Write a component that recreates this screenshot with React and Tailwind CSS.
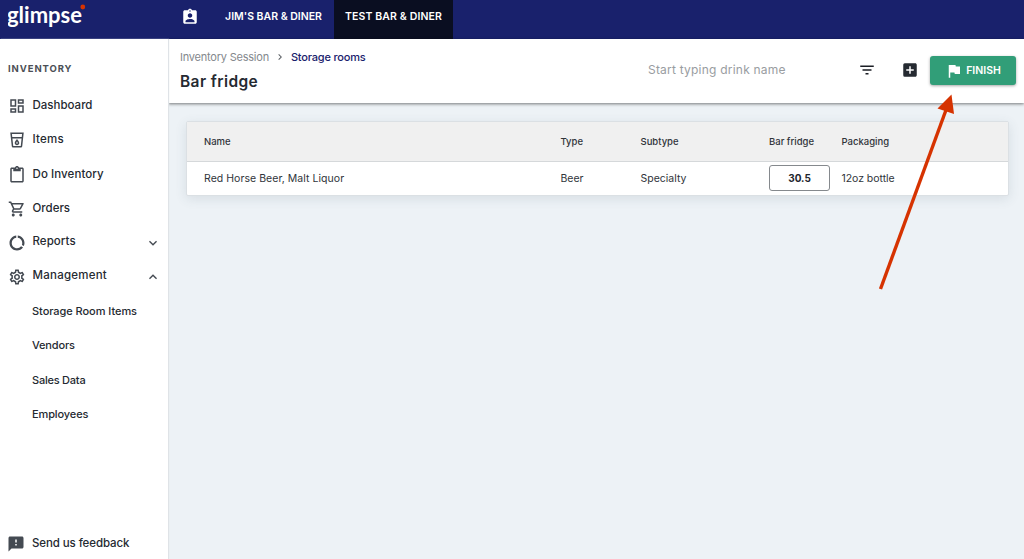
import React from "react";
import {
  MdAssignmentInd,
  MdOutlineDashboard,
  MdOutlineLocalDrink,
  MdContentPaste,
  MdOutlineShoppingCart,
  MdDataUsage,
  MdOutlineSettings,
  MdExpandMore,
  MdExpandLess,
  MdChevronRight,
  MdFeedback,
  MdFilterList,
  MdAddBox,
  MdFlag,
} from "react-icons/md";

const navItems = [
  { label: "Dashboard", icon: MdOutlineDashboard, row: "h-[34px]" },
  { label: "Items", icon: MdOutlineLocalDrink, row: "h-[34px] tracking-[0.02em]" },
  { label: "Do Inventory", icon: MdContentPaste, row: "h-[35px] tracking-[0.007em]" },
  { label: "Orders", icon: MdOutlineShoppingCart, row: "h-[34px]" },
  { label: "Reports", icon: MdDataUsage, row: "h-[33px] tracking-[0.005em]", toggle: MdExpandMore },
  { label: "Management", icon: MdOutlineSettings, row: "h-[35px] tracking-[0.02em]", toggle: MdExpandLess },
];

const managementItems = [
  { label: "Storage Room Items", style: "tracking-[-0.005em]" },
  { label: "Vendors", style: "tracking-[-0.015em]" },
  { label: "Sales Data", style: "tracking-[-0.02em]" },
  { label: "Employees", style: "tracking-[-0.01em]" },
];

const Logo = () => (
  <svg width="84" height="30" viewBox="0 0 84 30" className="shrink-0">
    <text
      x="-1"
      y="23"
      textLength="75"
      lengthAdjust="spacingAndGlyphs"
      fontFamily="Lato, sans-serif"
      fontSize="23.5"
      fontWeight="700"
      fill="#fff"
    >
      glimpse
    </text>
    <circle cx="74.8" cy="7" r="2.4" fill="#d63301" />
  </svg>
);

const TopBar = () => (
  <header className="flex h-[39px] shrink-0 bg-[#19216c] pl-2 text-[10.5px] font-semibold text-white">
    <Logo />
    <div className="flex w-[121px] items-center justify-end pr-[14px] pb-[6px]">
      <MdAssignmentInd className="h-[18px] w-[18px]" />
    </div>
    <div className="flex w-[121px] items-center justify-center pb-[6px] whitespace-nowrap">
      JIM'S BAR &amp; DINER
    </div>
    <div className="flex w-[119px] items-center justify-center bg-[#0a0e21] pb-[6px] tracking-[0.012em] whitespace-nowrap">
      TEST BAR &amp; DINER
    </div>
  </header>
);

const Sidebar = () => (
  <aside className="relative z-10 flex w-[168px] shrink-0 flex-col bg-white font-medium text-[#252a31] shadow-[1px_0_1px_#dfe3e7]">
    <h2 className="mt-[22px] mb-[12px] ml-2 text-[9.5px] leading-4 font-bold tracking-[0.095em] text-[#4b4f55]">
      INVENTORY
    </h2>
    <nav className="flex flex-col text-[11.5px]">
      {navItems.map(({ label, icon: Icon, row, toggle: Toggle }) => (
        <a key={label} className={`flex items-center pl-[7.5px] ${row}`}>
          <Icon className="mr-[7px] h-[18px] w-[18px] text-[#444a52]" />
          <span className={Toggle ? "pb-px" : ""}>{label}</span>
          {Toggle && <Toggle className="mr-[7px] ml-auto h-4 w-4 text-[#444a52]" />}
        </a>
      ))}
    </nav>
    <ul className="pl-8 text-[11px]">
      {managementItems.map(({ label, style }) => (
        <li key={label} className={`flex h-[34.4px] items-center ${style}`}>
          {label}
        </li>
      ))}
    </ul>
    <a className="mt-auto flex h-[31px] items-center pl-[7px] text-[11.5px] tracking-[-0.009em]">
      <MdFeedback className="mr-[7px] h-[18px] w-[18px] text-[#444a52]" />
      Send us feedback
    </a>
  </aside>
);

const PageHeader = () => (
  <div className="flex h-[64px] shrink-0 bg-white pl-3 shadow-[0_1px_3px_rgba(0,0,0,0.5)]">
    <div className="w-[467px] pt-[10px]">
      <div className="flex h-4 items-center text-[11px]">
        <span className="tracking-[-0.02em] text-[#84888d]">Inventory Session</span>
        <MdChevronRight className="mx-[5px] h-3 w-3 text-[#5c6065]" />
        <span className="font-medium tracking-[-0.018em] text-[#19216c]">Storage rooms</span>
      </div>
      <h1 className="mt-[7px] text-[15.5px] leading-5 font-semibold tracking-[0.026em] text-[#252a31]">
        Bar fridge
      </h1>
    </div>
    <div className="w-[211px] pt-[21px] pl-px text-[12px] leading-5 text-[#999da1]">
      <span className="tracking-[0.018em]">Start typing drink name</span>
    </div>
    <MdFilterList className="mt-[22px] h-[18px] w-[18px] text-[#1b1e25]" />
    <MdAddBox className="mt-[22px] ml-[25px] h-[18px] w-[18px] text-[#252a31]" />
    <button className="mt-[17px] ml-[11px] flex h-[29px] w-[86px] items-center justify-center rounded-[3px] bg-[#319e78] text-[10.5px] font-semibold text-white shadow-[0_1px_3px_rgba(0,0,0,0.35)]">
      <MdFlag className="mr-[3px] h-[18px] w-[18px]" />
      FINISH
    </button>
  </div>
);

const columns = "grid grid-cols-[356.5px_80px_128.5px_72.5px_1fr] items-center pl-[17px]";

const ItemsTable = () => (
  <div className="mt-[18px] mr-[15px] ml-[18px] rounded-[2px] border border-[#dbe0e4] bg-white text-[#30343a] shadow-[0_3px_12px_rgba(60,80,100,0.12)]">
    <div className={`${columns} h-[40px] border-b border-[#d5d8da] bg-[#f0f0f0] pt-px text-[9.5px] font-medium`}>
      <span>Name</span>
      <span>Type</span>
      <span>Subtype</span>
      <span>Bar fridge</span>
      <span>Packaging</span>
    </div>
    <div className={`${columns} h-[33px] text-[10.5px]`}>
      <span className="tracking-[0.004em]">Red Horse Beer, Malt Liquor</span>
      <span>Beer</span>
      <span>Specialty</span>
      <span className="-mt-px flex h-[26px] w-[61px] items-center justify-center rounded-[3px] border border-[#85898d] text-[10px] font-bold text-[#22262d]">
        30.5
      </span>
      <span className="tracking-[-0.004em]">12oz bottle</span>
    </div>
  </div>
);

// Callout pointing at the finish button
const Arrow = () => (
  <svg className="pointer-events-none absolute top-0 left-0" width="1024" height="559">
    <path d="M880.5 289 L946 110" stroke="#d63301" strokeWidth="3.4" />
    <path d="M951.5 94.5 L954 114 L937.5 108.5 Z" fill="#d63301" />
  </svg>
);

export default function App() {
  return (
    <div className="relative flex h-[559px] w-[1024px] flex-col overflow-hidden bg-[#edf2f6] font-['Inter',sans-serif]">
      <TopBar />
      <div className="flex min-h-0 flex-1">
        <Sidebar />
        <main className="flex min-w-0 flex-1 flex-col">
          <PageHeader />
          <ItemsTable />
        </main>
      </div>
      <Arrow />
    </div>
  );
}
